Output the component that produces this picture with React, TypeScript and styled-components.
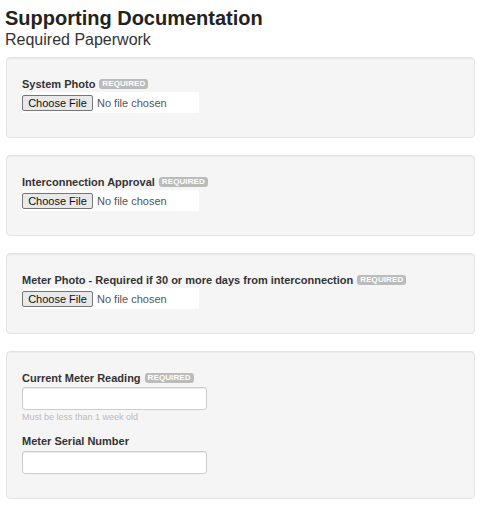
import styled, { createGlobalStyle } from "styled-components";

const GlobalStyle = createGlobalStyle`
  body {
    margin: 0;
    background: #fff;
    font-family: "Liberation Sans", Arial, sans-serif;
    color: #333;
  }
`;

const Page = styled.div`
  padding: 7px 10px 0 6px;
  width: 485px;
  box-sizing: border-box;
`;

const Title = styled.h1`
  margin: 0 0 0 -1px;
  font-size: 20px;
  line-height: 22px;
  font-weight: 700;
  color: #222;
`;

const Subtitle = styled.h2`
  margin: 2px 0 8px -1px;
  font-size: 16px;
  line-height: 18px;
  font-weight: 400;
  color: #333;
`;

const Wells = styled.div`
  display: flex;
  flex-direction: column;
  gap: 17px;
`;

const Well = styled.section`
  background: #f5f5f5;
  border: 1px solid #e3e3e3;
  border-radius: 4px;
  box-shadow: inset 0 1px 1px rgba(0, 0, 0, 0.05);
  padding: 18px 15px 24px;
  display: flex;
  flex-direction: column;
`;

const Label = styled.label<{ $gap?: number }>`
  display: flex;
  align-items: center;
  gap: 4px;
  font-size: 11px;
  line-height: 16px;
  font-weight: 700;
  color: #333;
  margin-bottom: ${(p) => p.$gap ?? 0}px;
`;

const Badge = styled.span`
  display: inline-block;
  background: #bbb;
  color: #fff;
  font-size: 8px;
  line-height: 10px;
  font-weight: 700;
  padding: 0 3px;
  border-radius: 3px;
  letter-spacing: 0.1px;
`;

const FileBox = styled.label`
  display: flex;
  align-items: center;
  gap: 4px;
  width: 177px;
  height: 21px;
  background: #fff;
  cursor: pointer;
`;

const HiddenInput = styled.input`
  display: none;
`;

const FileButton = styled.span`
  display: inline-flex;
  align-items: center;
  justify-content: center;
  box-sizing: border-box;
  width: 71px;
  height: 16px;
  background: #e9e9e9;
  border: 1px solid #767676;
  border-radius: 2px;
  font-size: 11px;
  color: #111;
`;

const FileName = styled.span`
  font-size: 11px;
  color: #555;
`;

const TextInput = styled.input`
  box-sizing: border-box;
  width: 185px;
  height: 23px;
  border: 1px solid #ccc;
  border-radius: 3px;
  background: #fff;
  box-shadow: inset 0 1px 1px rgba(0, 0, 0, 0.075);
  padding: 2px 6px;
  font-size: 11px;
  font-family: inherit;
`;

const Help = styled.div`
  font-size: 9px;
  line-height: 12px;
  margin-top: 1px;
  color: #bbb;
`;

const Spacer = styled.div<{ $h: number }>`
  height: ${(p) => p.$h}px;
`;

function FileField({ label }: { label: string }) {
  return (
    <Well>
      <Label>
        {label} <Badge>REQUIRED</Badge>
      </Label>
      <FileBox>
        <HiddenInput type="file" />
        <FileButton>Choose File</FileButton>
        <FileName>No file chosen</FileName>
      </FileBox>
    </Well>
  );
}

export default function App() {
  return (
    <>
      <GlobalStyle />
      <Page>
        <Title>Supporting Documentation</Title>
        <Subtitle>Required Paperwork</Subtitle>
        <Wells>
          <FileField label="System Photo" />
          <FileField label="Interconnection Approval" />
          <FileField label="Meter Photo - Required if 30 or more days from interconnection" />
          <Well>
            <Label $gap={1}>
              Current Meter Reading <Badge>REQUIRED</Badge>
            </Label>
            <TextInput type="text" />
            <Help>Must be less than 1 week old</Help>
            <Spacer $h={10} />
            <Label $gap={2}>Meter Serial Number</Label>
            <TextInput type="text" />
          </Well>
        </Wells>
      </Page>
    </>
  );
}
